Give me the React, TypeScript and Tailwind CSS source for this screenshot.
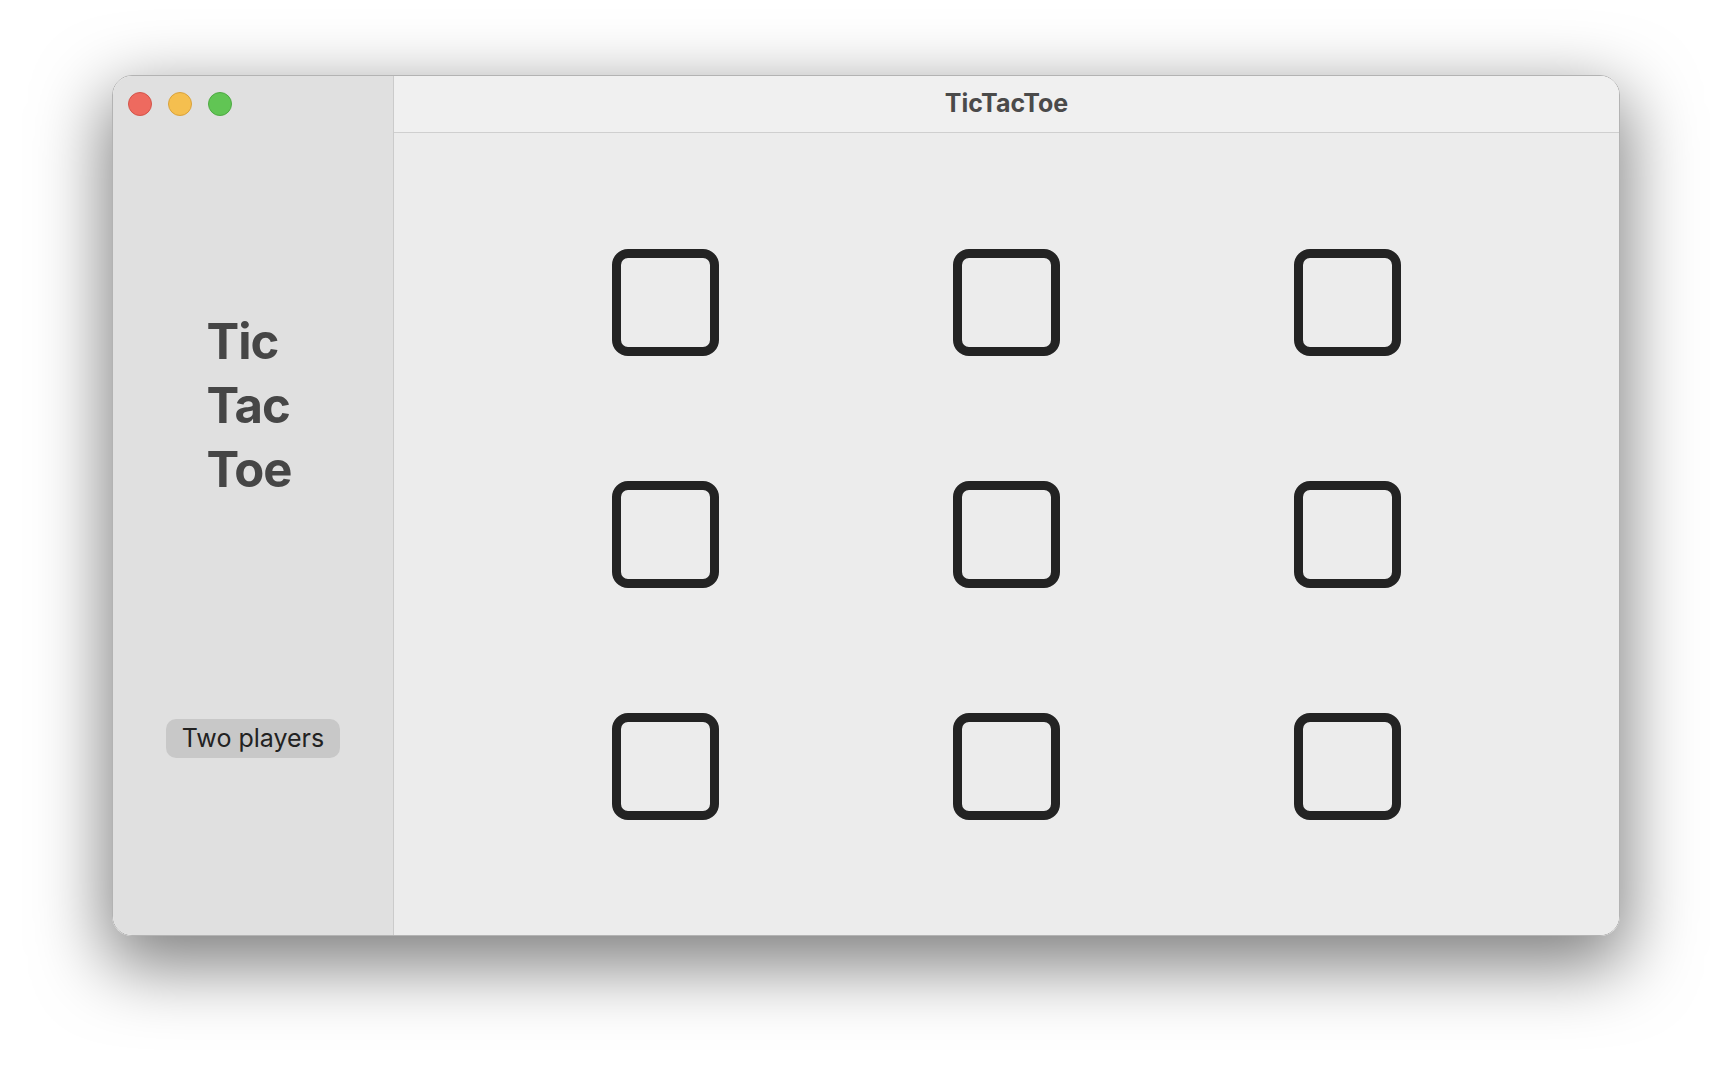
import React from 'react';

const font = { fontFamily: 'Inter, "Noto Sans", sans-serif' };

function TrafficLights() {
  return (
    <div className="flex items-center gap-4">
      <div className="w-6 h-6 rounded-full bg-[#ee6a5f] border border-[#d3544a]" />
      <div className="w-6 h-6 rounded-full bg-[#f5bf4f] border border-[#d9a23c]" />
      <div className="w-6 h-6 rounded-full bg-[#61c554] border border-[#4ea943]" />
    </div>
  );
}

function Cell() {
  return <div className="w-[107px] h-[107px] rounded-[16px] border-[9px] border-[#232323]" />;
}

export default function App() {
  return (
    <div className="w-[1732px] h-[1084px] bg-white pl-[112px] pt-[75px]" style={font}>
      <div className="w-[1508px] h-[861px] flex rounded-[20px] overflow-hidden border border-[#b3b3b3] shadow-[0_24px_70px_6px_rgba(0,0,0,0.5)]">
        {/* Sidebar */}
        <div className="w-[281px] shrink-0 bg-[#e0e0e0] border-r border-[#cbcbcb] flex flex-col items-center">
          <div className="self-start pl-[15px] pt-[16px]">
            <TrafficLights />
          </div>
          <div className="mt-[194px] mr-[8px] text-[49px] leading-[64px] font-bold text-[#464646] tracking-[-1px]">
            <div>Tic</div>
            <div>Tac</div>
            <div>Toe</div>
          </div>
          <button className="mt-[217px] h-[39px] px-[16px] rounded-[10px] bg-[#c8c8c8] text-[25px] text-[#222222]">
            Two players
          </button>
        </div>

        {/* Main */}
        <div className="flex-1 flex flex-col bg-[#ececec]">
          <div className="h-[57px] shrink-0 bg-[#f0f0f0] border-b border-[#cfcfcf] flex items-center justify-center">
            <span className="text-[25px] font-bold text-[#4a4a4a]">TicTacToe</span>
          </div>
          <div className="flex-1 flex items-center justify-center">
            <div className="grid grid-cols-[107px_107px_107px] gap-x-[234px] gap-y-[125px]">
              {Array.from({ length: 9 }).map((_, i) => (
                <Cell key={i} />
              ))}
            </div>
          </div>
        </div>
      </div>
    </div>
  );
}
